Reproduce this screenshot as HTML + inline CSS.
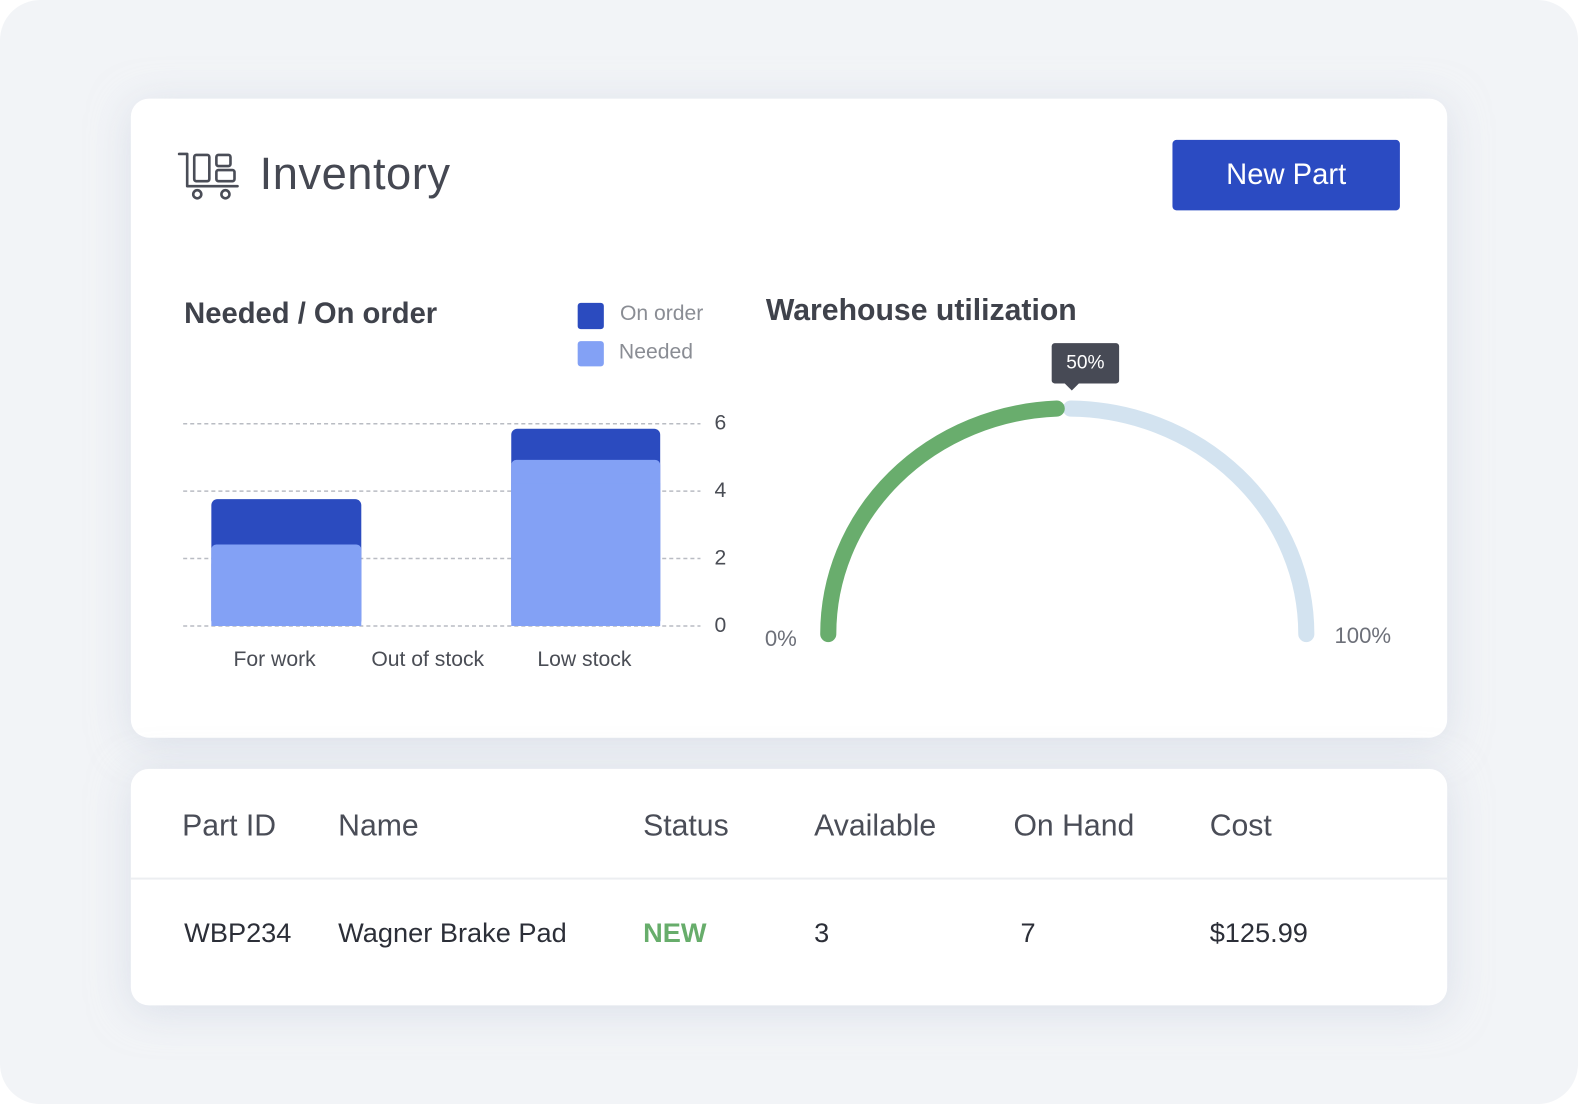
<!DOCTYPE html>
<html><head><meta charset="utf-8"><style>
html,body{margin:0;padding:0;background:#fff;}
body{width:1578px;height:1104px;position:relative;overflow:hidden;font-family:"Liberation Sans",sans-serif;}
#w{position:absolute;left:0;top:0;width:1568px;height:1097px;transform:scale(1.0064);transform-origin:0 0;}
.bg{position:absolute;left:0;top:0;width:1568px;height:1097px;background:#f2f4f7;border-radius:40px;}
.card{position:absolute;background:#fff;border-radius:18px;box-shadow:0 6px 40px rgba(200,208,222,0.55);}
.t{position:absolute;white-space:nowrap;}
</style></head><body><div id="w">
<div class="bg"></div>
<div class="card" style="left:130px;top:98px;width:1308px;height:635px;"></div>
<div class="card" style="left:130px;top:764px;width:1308px;height:235px;"></div>

<svg style="position:absolute;left:0;top:0" width="1578" height="1104">
 <g fill="none" stroke="#4a4d57" stroke-width="2.6" stroke-linecap="round" stroke-linejoin="round">
  <path d="M178 153 H186 V185 H236"/>
  <rect x="193" y="154" width="15" height="26" rx="2"/>
  <rect x="215" y="154" width="14" height="11" rx="2"/>
  <rect x="215" y="169" width="18" height="11" rx="2"/>
  <circle cx="196" cy="193" r="4"/>
  <circle cx="224" cy="193" r="4"/>
 </g>
 <g stroke="#b9bcc3" stroke-width="1.5" stroke-dasharray="4 3">
  <line x1="182" y1="421" x2="696" y2="421"/>
  <line x1="182" y1="488" x2="696" y2="488"/>
  <line x1="182" y1="555" x2="696" y2="555"/>
  <line x1="182" y1="622" x2="696" y2="622"/>
 </g>
 <rect x="210" y="496" width="149" height="126" rx="6" fill="#2b4bbf"/>
 <rect x="210" y="541" width="149" height="81" rx="5" fill="#83a1f5"/>
 <rect x="210" y="560" width="149" height="62" fill="#83a1f5"/>
 <rect x="508" y="426" width="148" height="196" rx="6" fill="#2b4bbf"/>
 <rect x="508" y="457" width="148" height="165" rx="5" fill="#83a1f5"/>
 <rect x="508" y="480" width="148" height="142" fill="#83a1f5"/>
 <rect x="574" y="301" width="26" height="26" rx="3" fill="#2b4bbf"/>
 <rect x="574" y="339" width="26" height="25" rx="3" fill="#83a1f5"/>
 <path d="M1064 406 A237 224 0 0 1 1298 630" fill="none" stroke="#d3e3f0" stroke-width="16" stroke-linecap="round"/>
 <path d="M823 630 A237 224 0 0 1 1050 406" fill="none" stroke="#69ad6d" stroke-width="16" stroke-linecap="round"/>
 <rect x="1045" y="341" width="67" height="40" rx="3" fill="#474a55"/>
 <path d="M1058 381 L1065 388 L1072 381 Z" fill="#474a55"/>
</svg>

<div class="t" style="left:258px;top:147px;font-size:45px;color:#454852;letter-spacing:0.5px;">Inventory</div>
<div style="position:absolute;left:1165px;top:139px;width:226px;height:70px;background:#2b4bc2;border-radius:4px;color:#fff;font-size:29px;line-height:70px;text-align:center;">New Part</div>

<div class="t" style="left:183px;top:296px;font-size:29px;font-weight:bold;color:#3f424b;">Needed / On order</div>
<div class="t" style="left:616px;top:300px;font-size:21px;color:#8a8d94;">On order</div>
<div class="t" style="left:615px;top:338px;font-size:21px;color:#8a8d94;">Needed</div>
<div class="t" style="left:710px;top:409px;font-size:21px;color:#4a4d55;">6</div>
<div class="t" style="left:710px;top:476px;font-size:21px;color:#4a4d55;">4</div>
<div class="t" style="left:710px;top:543px;font-size:21px;color:#4a4d55;">2</div>
<div class="t" style="left:710px;top:610px;font-size:21px;color:#4a4d55;">0</div>
<div class="t" style="left:232px;top:644px;font-size:21px;color:#4a4d55;">For work</div>
<div class="t" style="left:369px;top:644px;font-size:21px;color:#4a4d55;">Out of stock</div>
<div class="t" style="left:534px;top:644px;font-size:21px;color:#4a4d55;">Low stock</div>

<div class="t" style="left:761px;top:292px;font-size:30px;font-weight:bold;color:#3f424b;">Warehouse utilization</div>
<div class="t" style="left:1045px;top:350px;width:67px;text-align:center;font-size:19px;color:#fff;">50%</div>
<div class="t" style="left:760px;top:622px;font-size:22px;color:#6d7079;">0%</div>
<div class="t" style="left:1326px;top:619px;font-size:22px;color:#6d7079;">100%</div>

<div class="t" style="left:181px;top:804px;font-size:30px;color:#4a4d57;">Part ID</div>
<div class="t" style="left:336px;top:804px;font-size:30px;color:#4a4d57;">Name</div>
<div class="t" style="left:639px;top:804px;font-size:30px;color:#4a4d57;">Status</div>
<div class="t" style="left:809px;top:804px;font-size:30px;color:#4a4d57;">Available</div>
<div class="t" style="left:1007px;top:804px;font-size:30px;color:#4a4d57;">On Hand</div>
<div class="t" style="left:1202px;top:804px;font-size:30px;color:#4a4d57;">Cost</div>
<div style="position:absolute;left:130px;top:872px;width:1308px;height:2px;background:#eceef1;"></div>
<div class="t" style="left:183px;top:912px;font-size:27px;color:#2c2f38;">WBP234</div>
<div class="t" style="left:336px;top:912px;font-size:27px;color:#2c2f38;">Wagner Brake Pad</div>
<div class="t" style="left:639px;top:912px;font-size:27px;font-weight:bold;color:#67ad6b;">NEW</div>
<div class="t" style="left:809px;top:912px;font-size:27px;color:#2c2f38;">3</div>
<div class="t" style="left:1014px;top:912px;font-size:27px;color:#2c2f38;">7</div>
<div class="t" style="left:1202px;top:912px;font-size:27px;color:#2c2f38;">$125.99</div>
</div></body></html>
